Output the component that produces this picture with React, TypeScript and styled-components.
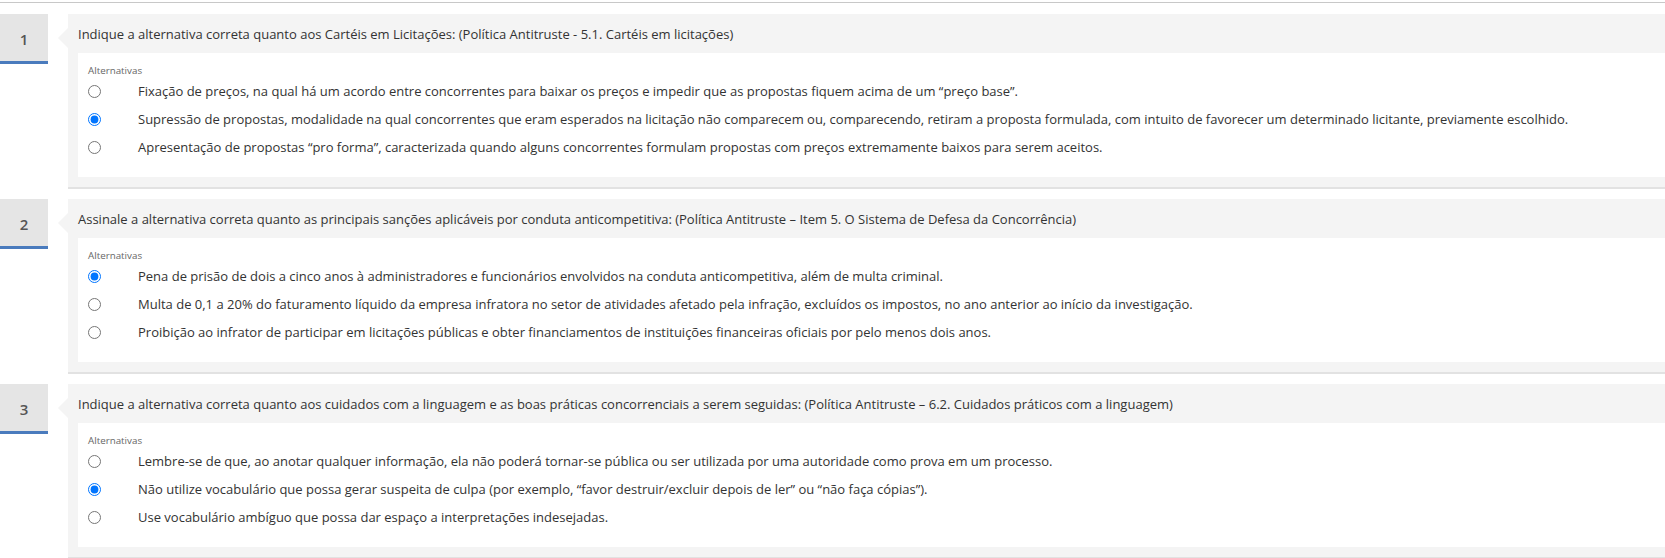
import React from "react";
import styled, { createGlobalStyle } from "styled-components";

const GlobalStyle = createGlobalStyle`
  html, body {
    margin: 0;
    padding: 0;
    background: #fff;
    overflow: hidden;
  }
  body {
    font-family: "Open Sans", "Noto Sans", sans-serif;
    color: #333;
  }
`;

const Page = styled.div`
  width: 100%;
  padding-top: 2px;
`;

const TopRule = styled.div`
  height: 1px;
  background-color: #c8c8c8;
`;

const QuestionList = styled.div`
  display: flex;
  flex-direction: column;
  gap: 10px;
  padding-top: 11px;
`;

const QuestionRow = styled.div`
  display: flex;
  align-items: flex-start;
  gap: 20px;
`;

const NumberBox = styled.div`
  flex: 0 0 48px;
  height: 50px;
  box-sizing: border-box;
  padding-top: 2px;
  border-bottom: 3px solid #4a7bbd;
  background-color: #e5e5e5;
  color: #555;
  font-size: 15px;
  font-weight: 600;
  display: flex;
  align-items: center;
  justify-content: center;
`;

const Card = styled.div`
  flex: 1;
  position: relative;
  background-color: #f4f4f4;
  border-bottom: 2px solid #e2e2e2;
  padding: 0 0 10px 10px;
  &::before {
    content: "";
    position: absolute;
    left: -10px;
    top: 14px;
    border-style: solid;
    border-width: 10px 10px 10px 0;
    border-color: transparent #f4f4f4 transparent transparent;
  }
`;

const CardHeader = styled.div`
  height: 39px;
  display: flex;
  align-items: center;
  font-size: 13px;
  padding-top: 1px;
  box-sizing: border-box;
  white-space: nowrap;
`;

const AnswerBox = styled.div`
  background-color: #fff;
  padding: 12px 0 16px 10px;
`;

const AltLabel = styled.div`
  font-size: 9.8px;
  line-height: 12px;
  color: #666;
`;

const Option = styled.label`
  height: 28px;
  display: flex;
  align-items: center;
  gap: 37px;
  font-size: 13px;
  white-space: nowrap;
`;

const Radio = styled.input.attrs({ type: "radio" })`
  width: 13px;
  height: 13px;
  margin: 0;
  flex: 0 0 13px;
`;

type Question = {
  n: number;
  title: string;
  options: string[];
  answer: number;
};

const questions: Question[] = [
  {
    n: 1,
    title:
      "Indique a alternativa correta quanto aos Cartéis em Licitações: (Política Antitruste - 5.1. Cartéis em licitações)",
    options: [
      "Fixação de preços, na qual há um acordo entre concorrentes para baixar os preços e impedir que as propostas fiquem acima de um “preço base”.",
      "Supressão de propostas, modalidade na qual concorrentes que eram esperados na licitação não comparecem ou, comparecendo, retiram a proposta formulada, com intuito de favorecer um determinado licitante, previamente escolhido.",
      "Apresentação de propostas “pro forma”, caracterizada quando alguns concorrentes formulam propostas com preços extremamente baixos para serem aceitos.",
    ],
    answer: 1,
  },
  {
    n: 2,
    title:
      "Assinale a alternativa correta quanto as principais sanções aplicáveis por conduta anticompetitiva: (Política Antitruste – Item 5. O Sistema de Defesa da Concorrência)",
    options: [
      "Pena de prisão de dois a cinco anos à administradores e funcionários envolvidos na conduta anticompetitiva, além de multa criminal.",
      "Multa de 0,1 a 20% do faturamento líquido da empresa infratora no setor de atividades afetado pela infração, excluídos os impostos, no ano anterior ao início da investigação.",
      "Proibição ao infrator de participar em licitações públicas e obter financiamentos de instituições financeiras oficiais por pelo menos dois anos.",
    ],
    answer: 0,
  },
  {
    n: 3,
    title:
      "Indique a alternativa correta quanto aos cuidados com a linguagem e as boas práticas concorrenciais a serem seguidas: (Política Antitruste – 6.2. Cuidados práticos com a linguagem)",
    options: [
      "Lembre-se de que, ao anotar qualquer informação, ela não poderá tornar-se pública ou ser utilizada por uma autoridade como prova em um processo.",
      "Não utilize vocabulário que possa gerar suspeita de culpa (por exemplo, “favor destruir/excluir depois de ler” ou “não faça cópias”).",
      "Use vocabulário ambíguo que possa dar espaço a interpretações indesejadas.",
    ],
    answer: 1,
  },
];

const QuestionBlock = ({ q }: { q: Question }) => (
  <QuestionRow>
    <NumberBox>{q.n}</NumberBox>
    <Card>
      <CardHeader>{q.title}</CardHeader>
      <AnswerBox>
        <AltLabel>Alternativas</AltLabel>
        {q.options.map((text, i) => (
          <Option key={i}>
            <Radio name={`q${q.n}`} defaultChecked={i === q.answer} />
            <span>{text}</span>
          </Option>
        ))}
      </AnswerBox>
    </Card>
  </QuestionRow>
);

export default function App() {
  return (
    <Page>
      <GlobalStyle />
      <TopRule />
      <QuestionList>
        {questions.map((q) => (
          <QuestionBlock key={q.n} q={q} />
        ))}
      </QuestionList>
    </Page>
  );
}
